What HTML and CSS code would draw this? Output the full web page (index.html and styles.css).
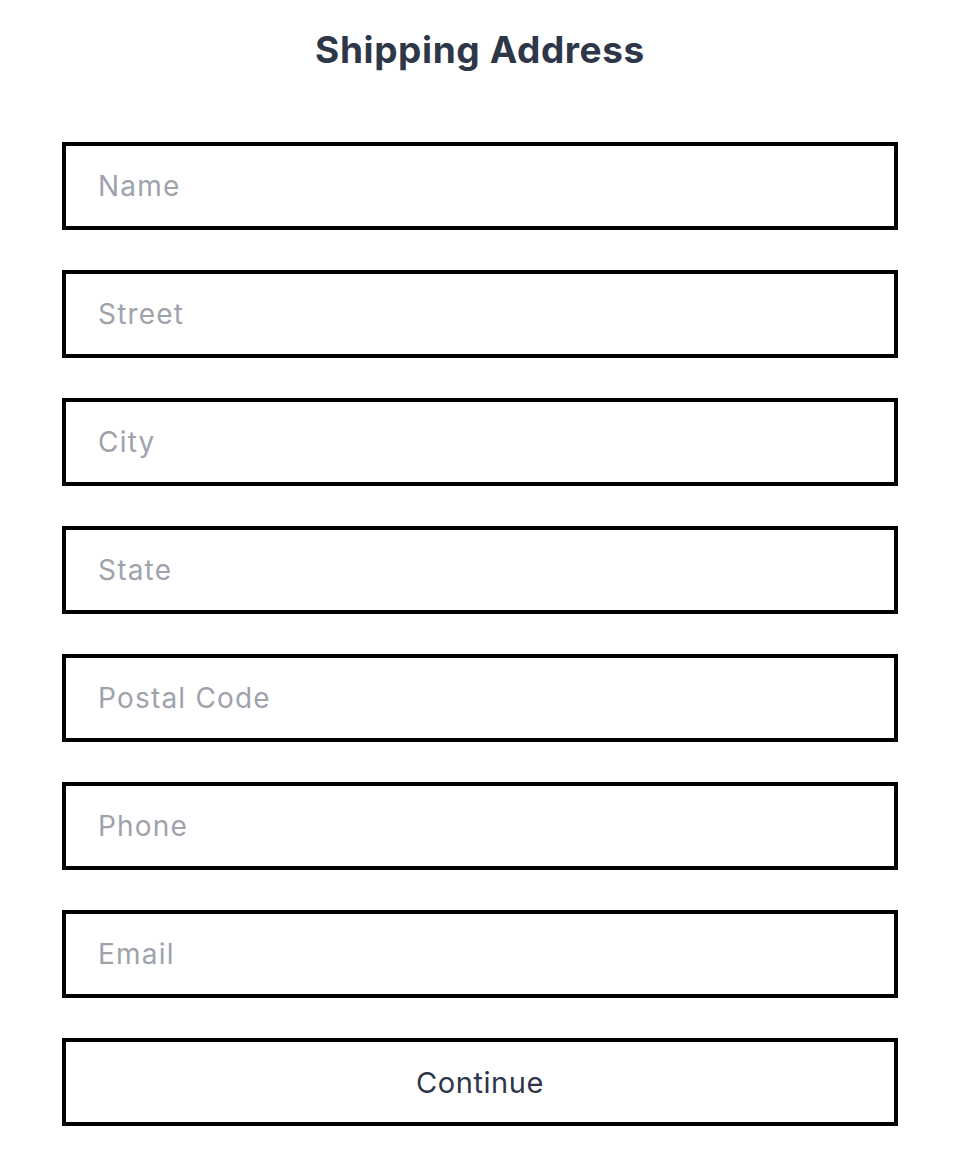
FILE: index.html
```html
<!DOCTYPE html>
<html>
<head>
<meta charset="utf-8">
<link rel="stylesheet" href="styles.css">
</head>
<body>
<div class="page">
  <h1 class="title">Shipping Address</h1>
  <form class="form">
    <input class="field" type="text" placeholder="Name">
    <input class="field" type="text" placeholder="Street">
    <input class="field" type="text" placeholder="City">
    <input class="field" type="text" placeholder="State">
    <input class="field" type="text" placeholder="Postal Code">
    <input class="field" type="text" placeholder="Phone">
    <input class="field" type="text" placeholder="Email">
    <button class="btn" type="button">Continue</button>
  </form>
</div>
</body>
</html>
```

FILE: styles.css
```css
html, body {
  margin: 0;
  padding: 0;
  background: #ffffff;
}
body {
  font-family: Inter, "Noto Sans", sans-serif;
}
.page {
  padding: 0 56px 0 62px;
  display: flex;
  flex-direction: column;
}
.title {
  margin: 0;
  height: 100px;
  line-height: 100px;
  text-align: center;
  font-size: 37px;
  letter-spacing: 0.6px;
  font-weight: 700;
  color: #2d3748;
}
.form {
  margin-top: 42px;
  display: flex;
  flex-direction: column;
  gap: 40px;
}
.field, .btn {
  box-sizing: border-box;
  height: 88px;
  width: 100%;
  border: 4px solid #000;
  border-radius: 0;
  background: #fff;
  font-family: Inter, "Noto Sans", sans-serif;
  margin: 0;
  outline: none;
}
.field {
  padding: 0 0 0 32px;
  font-size: 28px;
  letter-spacing: 1.2px;
  color: #2d3748;
}
.field::placeholder {
  color: #9ea3ab;
  opacity: 1;
}
.btn {
  font-size: 29px;
  letter-spacing: 0.6px;
  color: #2d3748;
  text-align: center;
  padding: 0;
}
```
